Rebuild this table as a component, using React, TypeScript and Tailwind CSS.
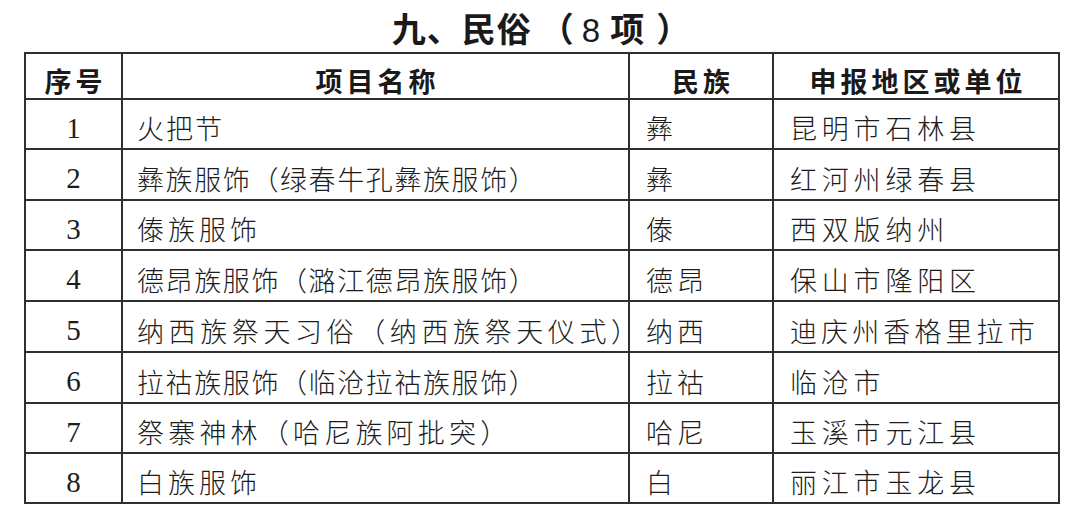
import React from 'react'

interface Row {
  no: number
  name: string
  nameTracking: string
  ethnic: string
  region: string
  regionTracking: string
  height: string
}

const rows: Row[] = [
  { no: 1, name: '火把节', nameTracking: 'tracking-[2px]', ethnic: '彝', region: '昆明市石林县', regionTracking: 'tracking-[4.8px]', height: 'h-[50px]' },
  { no: 2, name: '彝族服饰（绿春牛孔彝族服饰）', nameTracking: 'tracking-[1.6px]', ethnic: '彝', region: '红河州绿春县', regionTracking: 'tracking-[4.8px]', height: 'h-[51px]' },
  { no: 3, name: '傣族服饰', nameTracking: 'tracking-[4px]', ethnic: '傣', region: '西双版纳州', regionTracking: 'tracking-[4.8px]', height: 'h-[50px]' },
  { no: 4, name: '德昂族服饰（潞江德昂族服饰）', nameTracking: 'tracking-[1.6px]', ethnic: '德昂', region: '保山市隆阳区', regionTracking: 'tracking-[4.8px]', height: 'h-[51px]' },
  { no: 5, name: '纳西族祭天习俗（纳西族祭天仪式）', nameTracking: 'tracking-[4.6px]', ethnic: '纳西', region: '迪庆州香格里拉市', regionTracking: 'tracking-[4.1px]', height: 'h-[51px]' },
  { no: 6, name: '拉祜族服饰（临沧拉祜族服饰）', nameTracking: 'tracking-[1.6px]', ethnic: '拉祜', region: '临沧市', regionTracking: 'tracking-[4.8px]', height: 'h-[51px]' },
  { no: 7, name: '祭寨神林（哈尼族阿批突）', nameTracking: 'tracking-[4.2px]', ethnic: '哈尼', region: '玉溪市元江县', regionTracking: 'tracking-[4.8px]', height: 'h-[50px]' },
  { no: 8, name: '白族服饰', nameTracking: 'tracking-[4px]', ethnic: '白', region: '丽江市玉龙县', regionTracking: 'tracking-[4.8px]', height: 'h-[50px]' },
]

const cjk = "font-['Noto_Sans_CJK_SC',sans-serif]"
const cell = 'border-2 border-[#2f2f2f] p-0 align-middle'

export default function App() {
  return (
    <div className={`w-[1080px] h-[514px] bg-white text-[#1c1c1c] overflow-hidden ${cjk}`}>
      {/* Title */}
      <div className="h-[52px] flex items-center justify-center pt-[5px] pl-[2px]">
        <h1 className="flex items-baseline text-[34px] font-bold leading-none text-[#1a1a1a]">
          <span className="tracking-[1px]">九、民俗</span>
          <span className="ml-[8px]">（</span>
          <span className="font-['Liberation_Sans',sans-serif] font-normal text-[33px] ml-[8px] mr-[10px]">8</span>
          <span>项</span>
          <span className="ml-[12px]">）</span>
        </h1>
      </div>

      {/* Table */}
      <table className="ml-6 w-[1034px] table-fixed border-collapse">
        <colgroup>
          <col className="w-[97px]" />
          <col className="w-[507px]" />
          <col className="w-[144px]" />
          <col className="w-[286px]" />
        </colgroup>
        <thead>
          <tr className="h-[46px]">
            {['序号', '项目名称', '民族', '申报地区或单位'].map((h) => (
              <th key={h} className={`${cell} text-[27px] font-bold text-[#1a1a1a]`}>
                <div className="flex items-center justify-center pt-[8px] pl-[4px] tracking-[4px] leading-none whitespace-nowrap">
                  {h}
                </div>
              </th>
            ))}
          </tr>
        </thead>
        <tbody>
          {rows.map((r) => (
            <tr key={r.no} className={r.height}>
              <td className={cell}>
                <div className="flex items-center justify-center pt-[8px] font-['Liberation_Serif',serif] text-[29px] leading-none">
                  {r.no}
                </div>
              </td>
              <td className={cell}>
                <div className={`flex items-center pt-[7px] pl-[14px] text-[27px] leading-none font-light whitespace-nowrap ${r.nameTracking}`}>
                  {r.name}
                </div>
              </td>
              <td className={cell}>
                <div className="flex items-center pt-[7px] pl-[16px] text-[27px] leading-none font-light tracking-[4px] whitespace-nowrap">
                  {r.ethnic}
                </div>
              </td>
              <td className={cell}>
                <div className={`flex items-center pt-[7px] pl-[16px] text-[27px] leading-none font-light whitespace-nowrap ${r.regionTracking}`}>
                  {r.region}
                </div>
              </td>
            </tr>
          ))}
        </tbody>
      </table>
    </div>
  )
}
